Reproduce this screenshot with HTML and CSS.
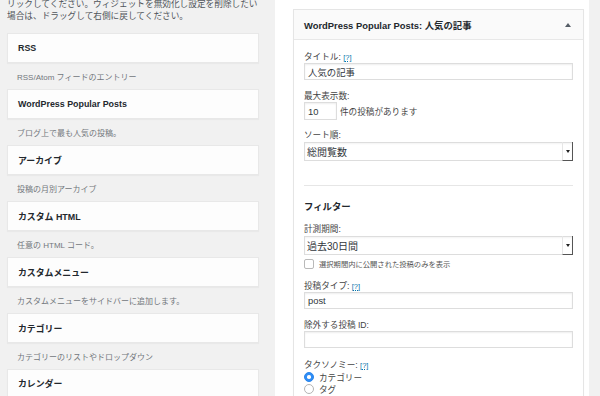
FILE: index.html
```html
<!DOCTYPE html>
<html lang="ja">
<head>
<meta charset="utf-8">
<link rel="stylesheet" href="styles.css">
</head>
<body>
<div class="page">
  <div class="available">
    <p class="intro">リックしてください。ウィジェットを無効化し設定を削除したい<br>場合は、ドラッグして右側に戻してください。</p>
    <div class="widgets">
      <div class="widget"><div class="widget-top">RSS</div><div class="widget-desc">RSS/Atom フィードのエントリー</div></div>
      <div class="widget"><div class="widget-top">WordPress Popular Posts</div><div class="widget-desc">ブログ上で最も人気の投稿。</div></div>
      <div class="widget"><div class="widget-top">アーカイブ</div><div class="widget-desc">投稿の月別アーカイブ</div></div>
      <div class="widget"><div class="widget-top">カスタム HTML</div><div class="widget-desc">任意の HTML コード。</div></div>
      <div class="widget"><div class="widget-top">カスタムメニュー</div><div class="widget-desc">カスタムメニューをサイドバーに追加します。</div></div>
      <div class="widget"><div class="widget-top">カテゴリー</div><div class="widget-desc">カテゴリーのリストやドロップダウン</div></div>
      <div class="widget"><div class="widget-top last">カレンダー</div></div>
    </div>
  </div>
  <div class="sidebar">
    <div class="panel">
      <div class="panel-head"><span>WordPress Popular Posts: 人気の記事</span><span class="toggle"></span></div>
      <div class="panel-body">
        <label class="lbl l-title">タイトル: <a class="help">[<u>?</u>]</a></label>
        <div class="input">人気の記事</div>
        <label class="lbl l-max">最大表示数:</label>
        <div class="num-row"><div class="input num">10</div><span class="after">件の投稿があります</span></div>
        <label class="lbl l-sort">ソート順:</label>
        <div class="select"><span class="sel-text">総閲覧数</span><span class="sel-btn"></span></div>
        <hr class="sep">
        <h4 class="filter">フィルター</h4>
        <label class="lbl l-range">計測期間:</label>
        <div class="select"><span class="sel-text">過去30日間</span><span class="sel-btn"></span></div>
        <div class="check-row"><span class="checkbox"></span><span>選択期間内に公開された投稿のみを表示</span></div>
        <label class="lbl l-type">投稿タイプ: <a class="help">[<u>?</u>]</a></label>
        <div class="input">post</div>
        <label class="lbl l-excl">除外する投稿 ID:</label>
        <div class="input"></div>
        <label class="lbl l-tax">タクソノミー: <a class="help">[<u>?</u>]</a></label>
        <div class="radio-row"><span class="radio on"></span><span>カテゴリー</span></div>
        <div class="radio-row"><span class="radio"></span><span>タグ</span></div>
      </div>
    </div>
  </div>
</div>
</body>
</html>
```
FILE: styles.css
```css
html, body {
  margin: 0;
  height: 100%;
}
body {
  background: #f1f1f1;
  font-family: "Liberation Sans", "Noto Sans CJK JP", sans-serif;
  color: #444;
  overflow: hidden;
}
.page {
  display: flex;
  height: 396px;
  align-items: stretch;
  overflow: hidden;
}
.available {
  flex: none;
  width: 252px;
  padding-left: 7px;
}
.intro {
  margin: -1px 0 0;
  font-size: 8.67px;
  line-height: 11.7px;
  color: #50555a;
  white-space: nowrap;
}
.widgets {
  margin-top: 10.6px;
}
.widget-top {
  box-sizing: border-box;
  height: 30px;
  border: 1px solid #e8e8e8;
  background: #fdfdfd;
  box-shadow: 0 1px 1px rgba(0,0,0,.03);
  display: flex;
  align-items: center;
  padding: 0 10px;
  font-size: 8.9px;
  font-weight: bold;
  color: #23282d;
}
.widget-top.last {
  height: 27px;
  border-bottom: none;
}
.widget-desc {
  height: 26px;
  display: flex;
  align-items: center;
  padding-left: 10px;
  font-size: 8px;
  color: #72777c;
}
.sidebar {
  flex: none;
  margin-left: 16px;
  width: 291px;
  background: #fff;
  padding: 9px 5px 0 18px;
}
.panel {
  border: 1px solid #e5e5e5;
  border-bottom: none;
  height: 100%;
  box-sizing: border-box;
  box-shadow: 0 1px 1px rgba(0,0,0,.04);
}
.panel-head {
  height: 29px;
  background: #fafafa;
  border-bottom: 1px solid #e8e8e8;
  display: flex;
  align-items: center;
  justify-content: space-between;
  padding: 0 12px 0 10px;
  font-size: 9.4px;
  font-weight: bold;
  color: #23282d;
}
.toggle {
  width: 0;
  height: 0;
  border-left: 3px solid transparent;
  border-right: 3px solid transparent;
  border-bottom: 4px solid #555d66;
}
.panel-body {
  padding: 0 10px;
  display: flex;
  flex-direction: column;
}
.lbl {
  display: block;
  height: 11px;
  font-size: 8.6px;
  line-height: 11px;
  color: #444;
  margin-top: 11px;
}
.l-title { margin-top: 12px; }
.l-sort { margin-top: 10px; }
.l-type { margin-top: 12px; }
.l-tax { margin-top: 12px; }
.help {
  color: #0073aa;
  font-size: 7.5px;
}
.help u {
  text-decoration: underline dotted;
}
.input {
  box-sizing: border-box;
  height: 17px;
  border: 1px solid #ddd;
  box-shadow: inset 0 1px 2px rgba(0,0,0,.07);
  background: #fff;
  font-size: 9.4px;
  color: #32373c;
  padding: 0 3px;
  display: flex;
  align-items: center;
}
.num-row {
  display: flex;
  align-items: center;
}
.input.num {
  width: 33px;
  height: 18px;
  flex: none;
}
.after {
  margin-left: 3px;
  font-size: 8.6px;
  color: #444;
}
.select {
  box-sizing: border-box;
  height: 19px;
  margin-top: 1px;
  border: 1px solid #ddd;
  box-shadow: inset 0 1px 2px rgba(0,0,0,.05);
  background: #fff;
  display: flex;
  align-items: stretch;
}
.sel-text {
  flex: 1;
  display: flex;
  align-items: center;
  padding-left: 2px;
  font-size: 10px;
  color: #32373c;
}
.sel-btn {
  width: 9px;
  margin: -1px -1px -1px 0;
  border-left: 1px solid #e6e6e6;
  border-right: 1px solid #555;
  border-bottom: 1px solid #555;
  display: flex;
  align-items: center;
  justify-content: center;
}
.sel-btn::after {
  content: "";
  border-left: 2px solid transparent;
  border-right: 2px solid transparent;
  border-top: 3px solid #222;
}
.sep {
  margin: 24px 0 0;
  border: none;
  border-top: 1px solid #e6e6e6;
  height: 0;
}
.filter {
  margin: 15px 0 0;
  height: 12px;
  line-height: 12px;
  font-size: 9.4px;
  font-weight: bold;
  color: #23282d;
}
.check-row {
  margin-top: 3px;
  height: 11px;
  display: flex;
  align-items: center;
  font-size: 7.3px;
  color: #555;
}
.checkbox {
  box-sizing: border-box;
  width: 10px;
  height: 10px;
  border: 1px solid #b9b9b9;
  border-radius: 2px;
  background: #fff;
  margin: 0 5px 0 0;
}
.radio-row {
  height: 12px;
  display: flex;
  align-items: center;
  font-size: 8.6px;
  color: #444;
}
.radio {
  box-sizing: border-box;
  width: 10px;
  height: 10px;
  border-radius: 50%;
  border: 1px solid #b4b4b4;
  background: #fff;
  margin-right: 5px;
  display: flex;
  align-items: center;
  justify-content: center;
}
.radio.on {
  background: #2f8df5;
  border-color: #2a86ec;
}
.radio.on::after {
  content: "";
  width: 3.5px;
  height: 3.5px;
  border-radius: 50%;
  background: #fff;
}
```
